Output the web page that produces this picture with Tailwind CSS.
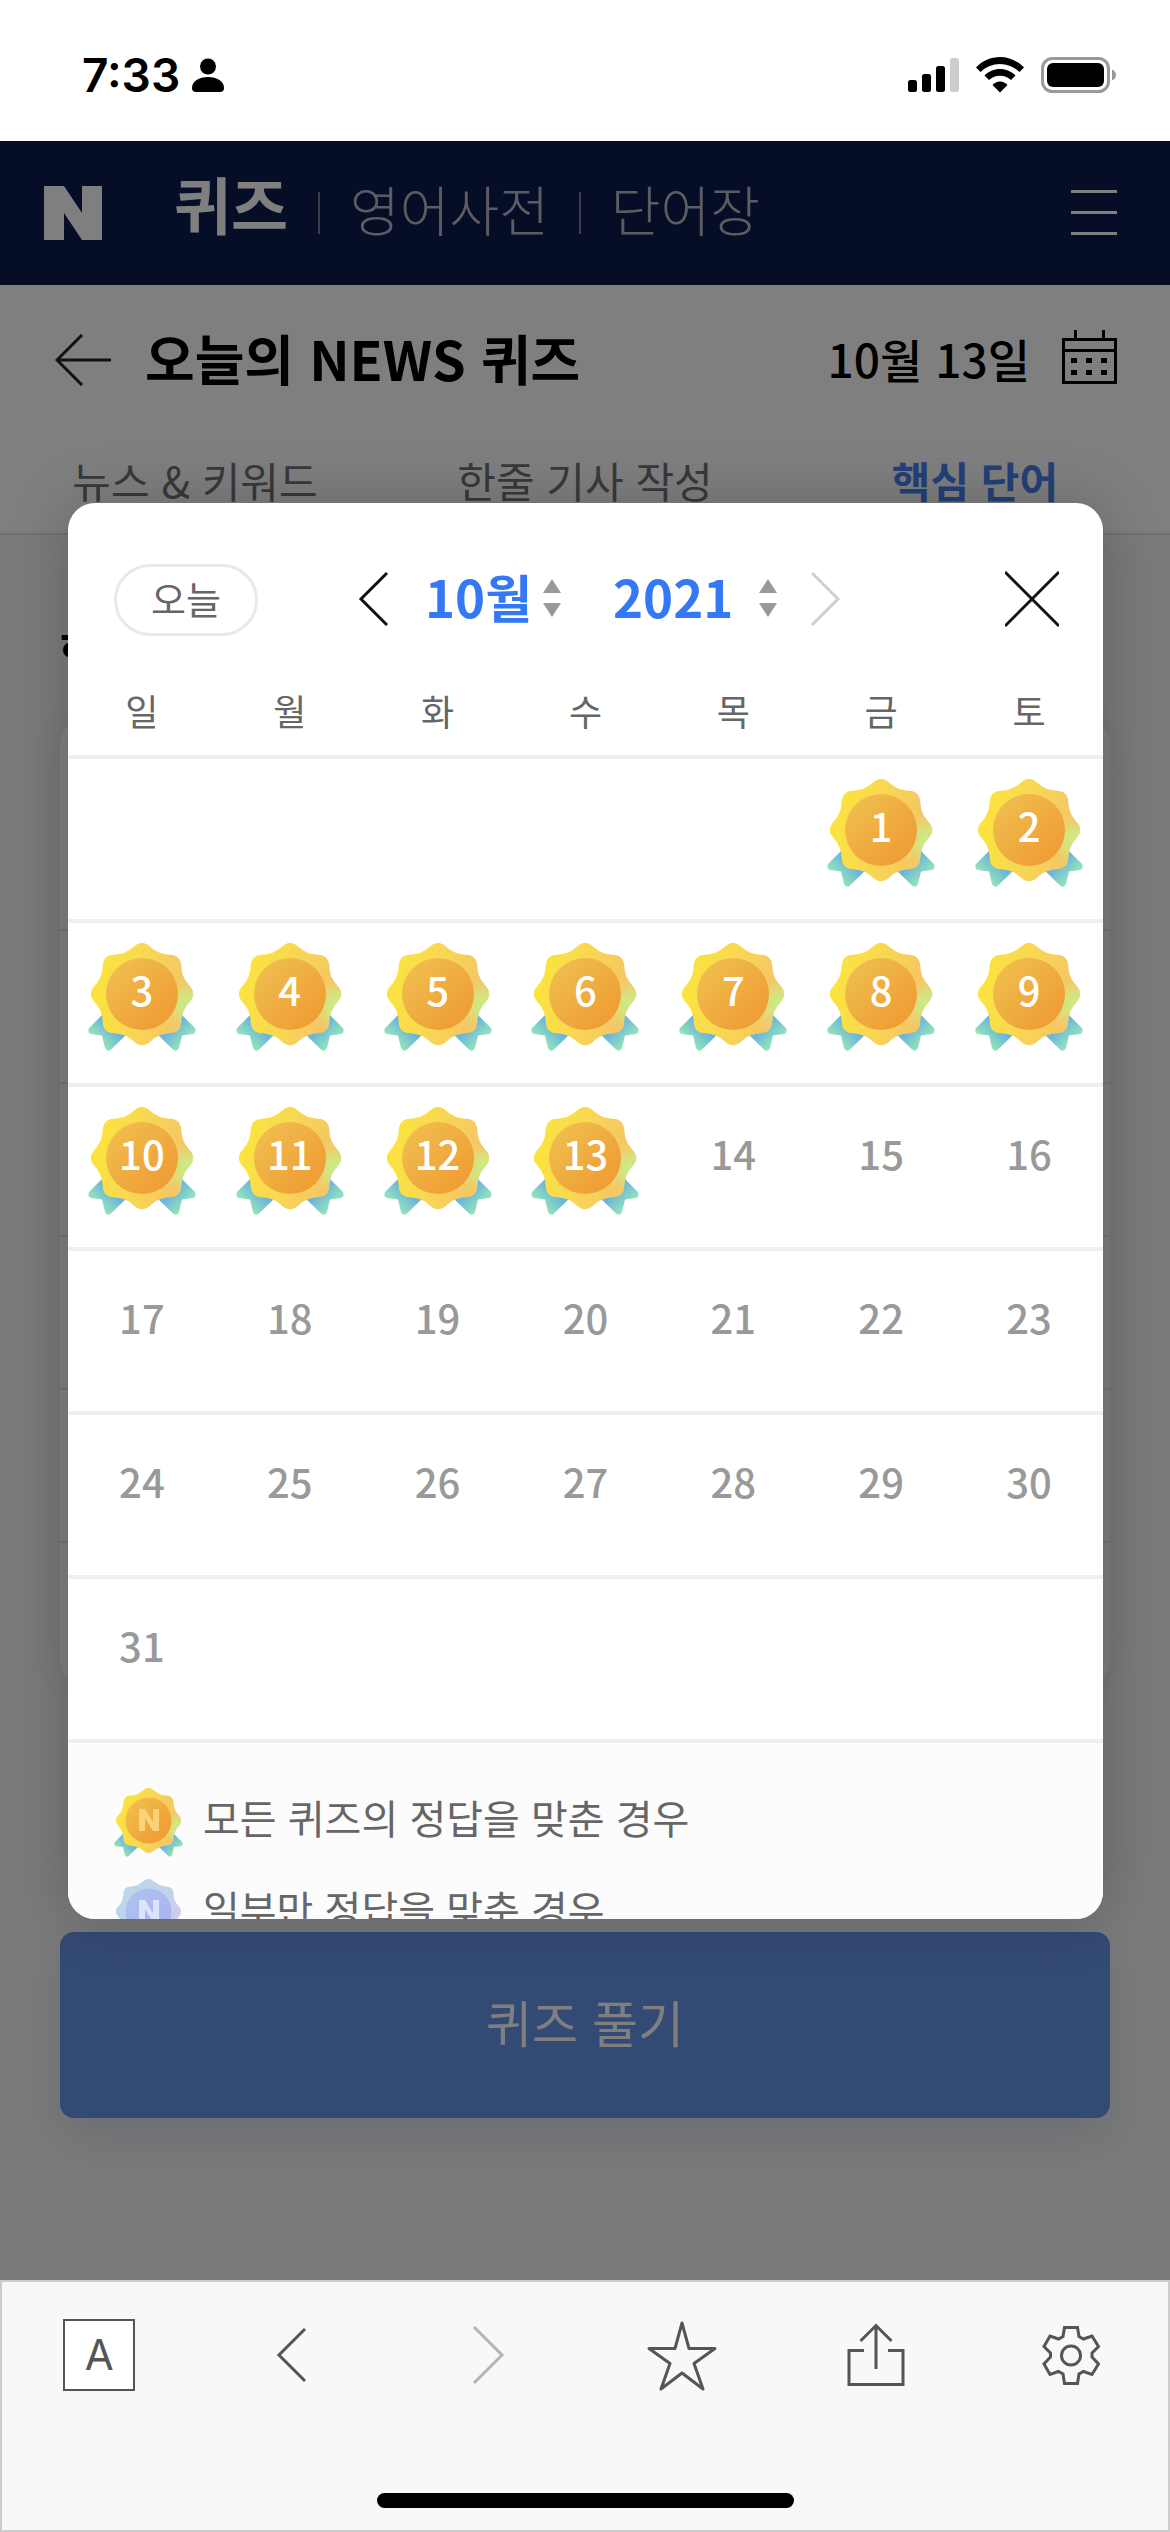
<!DOCTYPE html>
<html lang="ko">
<head>
  <meta charset="UTF-8">
  <meta name="viewport" content="width=device-width, initial-scale=1.0">
  <title>오늘의 NEWS 퀴즈</title>
  <script src="https://cdn.jsdelivr.net/npm/@tailwindcss/browser@4"></script>
</head>
<body class="min-h-screen flex flex-col bg-white font-['Noto_Sans_CJK_KR',sans-serif] text-black">
  <!-- 공용 심볼 -->
  <svg width="0" height="0" class="absolute" aria-hidden="true">
    <defs>
      <linearGradient id="goldStar" x1="0" y1="0.4" x2="1" y2="0.6">
        <stop offset="0" stop-color="#fce43c"/>
        <stop offset="0.45" stop-color="#f8d852"/>
        <stop offset="0.9" stop-color="#f5c566"/>
      </linearGradient>
      <radialGradient id="goldGreen" gradientUnits="userSpaceOnUse" cx="101" cy="62" r="30">
        <stop offset="0" stop-color="#c4f088"/>
        <stop offset="0.4" stop-color="#d0e884" stop-opacity="0.8"/>
        <stop offset="1" stop-color="#f0cc70" stop-opacity="0"/>
      </radialGradient>
      <linearGradient id="goldCircle" x1="0" y1="0" x2="1" y2="1">
        <stop offset="0.1" stop-color="#f0be4e"/>
        <stop offset="0.8" stop-color="#ef9f36"/>
      </linearGradient>
      <linearGradient id="ribbonLeft" gradientUnits="userSpaceOnUse" x1="22" y1="84" x2="9" y2="97">
        <stop offset="0" stop-color="#6cb6da"/>
        <stop offset="1" stop-color="#94e4ba"/>
      </linearGradient>
      <linearGradient id="ribbonRight" gradientUnits="userSpaceOnUse" x1="86" y1="84" x2="99" y2="97">
        <stop offset="0" stop-color="#6cb6da"/>
        <stop offset="1" stop-color="#94e4ba"/>
      </linearGradient>
      <linearGradient id="blueStar" x1="0" y1="0.3" x2="1" y2="0.7">
        <stop offset="0" stop-color="#bcd6ea"/>
        <stop offset="0.7" stop-color="#c0d4e8"/>
        <stop offset="1" stop-color="#d8c8f4"/>
      </linearGradient>
      <linearGradient id="blueCircle" x1="0" y1="0" x2="1" y2="1">
        <stop offset="0" stop-color="#b0c4ee"/>
        <stop offset="1" stop-color="#a8b0f4"/>
      </linearGradient>
      <path id="starShape" d="M45.8 3.7Q54 -4 62.3 3.7Q70.5 11.3 81.7 11.7Q92.9 12.1 93.3 23.3Q93.7 34.5 101.4 42.8Q109 51 101.4 59.3Q93.7 67.5 93.3 78.7Q92.9 89.9 81.7 90.3Q70.5 90.7 62.3 98.4Q54 106 45.8 98.4Q37.5 90.7 26.3 90.3Q15.1 89.9 14.7 78.7Q14.3 67.5 6.7 59.3Q-1 51 6.7 42.8Q14.3 34.5 14.7 23.3Q15.1 12.1 26.3 11.7Q37.5 11.3 45.8 3.7Z"/>
    </defs>
    <symbol id="badgeGold" viewBox="0 0 108 108">
      <path fill="url(#ribbonLeft)" d="M14 72L1 85Q-1 90 3 91L14 92.5L17 105Q19 109.5 23 106.5L38 92Z"/>
      <path fill="url(#ribbonRight)" d="M94 72L107 85Q109 90 105 91L94 92.5L91 105Q89 109.5 85 106.5L70 92Z"/>
      <use href="#starShape" fill="url(#goldStar)"/>
      <use href="#starShape" fill="url(#goldGreen)"/>
      <circle cx="54" cy="51" r="36" fill="url(#goldCircle)"/>
    </symbol>
    <symbol id="badgeBlue" viewBox="0 0 108 108">
      <path fill="#b4d4ec" d="M14 72L1 85Q-1 90 3 91L14 92.5L17 105Q19 109.5 23 106.5L38 92Z"/>
      <path fill="#b4d4ec" d="M94 72L107 85Q109 90 105 91L94 92.5L91 105Q89 109.5 85 106.5L70 92Z"/>
      <use href="#starShape" fill="url(#blueStar)"/>
      <circle cx="54" cy="51" r="36" fill="url(#blueCircle)"/>
    </symbol>
    <symbol id="spinner" viewBox="0 0 18 40">
      <path fill="#999" d="M9 1L18 15H0ZM9 39L0 25H18Z"/>
    </symbol>
  </svg>

  <!-- 상태 표시줄 -->
  <div class="h-[141px] shrink-0 flex items-center justify-between pl-[82px] pr-[53px] pt-2">
    <div class="flex items-center gap-3">
      <span class="font-['Inter',sans-serif] font-semibold text-[46px] leading-[48px]">7:33</span>
      <svg class="w-8 h-[34px]" viewBox="0 0 32 34"><circle cx="16" cy="8.500" r="8"/><path d="M0 30C0 23 7 19 16 19S32 23 32 30Q32 34 28 34H4Q0 34 0 30Z"/></svg>
    </div>
    <div class="flex items-center gap-[17px]">
      <svg class="w-[51px] h-[36px]" viewBox="0 0 51 36"><rect y="23" width="9" height="12" rx="2.500"/><rect x="14" y="17" width="9" height="18" rx="2.500"/><rect x="28" y="9" width="9" height="26" rx="2.500"/><rect x="42" y="1" width="9" height="34" rx="2.500" fill="#ccc"/></svg>
      <svg class="w-12 h-[36px]" viewBox="0 0 48 36"><path d="M24 0C33 0 42 4 48 10.500L43.500 15C38 9.800 31 7 24 7S10 9.800 4.500 15L0 10.500C6 4 15 0 24 0Z"/><path d="M24 12C30 12 35.500 14.500 39.500 18.500L35 23C32 20.200 28 18.700 24 18.700S16 20.200 13 23L8.500 18.500C12.500 14.500 18 12 24 12Z"/><path d="M24 24.500C27 24.500 29.500 25.800 31.500 28L24 35.500L16.500 28C18.500 25.800 21 24.500 24 24.500Z"/></svg>
      <svg class="w-[76px] h-[36px]" viewBox="0 0 76 36"><rect x="1.500" y="1.500" width="66" height="33" rx="10" fill="none" stroke="#999" stroke-width="3"/><rect x="6" y="6" width="57" height="24" rx="6"/><path fill="#999" d="M71 12.500Q75 14.500 75 18T71 23.500Z"/></svg>
    </div>
  </div>

  <div class="relative flex-1 flex flex-col overflow-hidden">
    <header class="h-36 shrink-0 bg-[#0c1a4c] flex items-center pl-11 pr-[53px]">
      <a href="#" aria-label="네이버" class="text-white"><svg class="w-[58px] h-[54px]" viewBox="0 0 58 54"><path fill="#fff" d="M0 0H20L38 27V0H58V54H38L20 27V54H0Z"/></svg></a>
      <nav class="ml-[72px] flex items-center">
        <a href="#" class="text-white font-bold text-[62px] leading-[80px] pb-5">퀴즈</a>
        <span class="w-[2px] h-[42px] bg-[#7a7d90] mx-[30px]"></span>
        <a href="#" class="text-[#b8b8c4] font-light text-[54px] leading-[80px] pb-2">영어사전</a>
        <span class="w-[2px] h-[42px] bg-[#7a7d90] mx-[30px]"></span>
        <a href="#" class="text-[#b8b8c4] font-light text-[54px] leading-[80px] pb-2">단어장</a>
      </nav>
      <button type="button" aria-label="메뉴" class="ml-auto"><svg class="w-[46px] h-[46px]" viewBox="0 0 46 46"><path stroke="#fff" stroke-width="3" d="M0 1.500H46M0 22.500H46M0 43.500H46"/></svg></button>
    </header>

    <div class="bg-white border-b-2 border-[#dcdfe4]">
      <div class="h-[150px] flex items-center pl-[55px] pr-[53px]">
        <button type="button" aria-label="뒤로"><svg class="w-14 h-[52px]" viewBox="0 0 56 52"><path fill="none" stroke="#222" stroke-width="3" d="M56 26H2M27 1L2 26L27 51"/></svg></button>
        <h1 class="ml-[34px] pb-1 font-bold text-[54px] leading-[80px]">오늘의 NEWS 퀴즈</h1>
        <span class="ml-auto pb-1 font-medium text-[46px] leading-[80px]">10월 13일</span>
        <button type="button" aria-label="달력" class="ml-8 pb-1.5"><svg class="w-[55px] h-[54px]" viewBox="0 0 55 54"><path fill="none" stroke="#000" stroke-width="3" d="M1.500 9.500H53.500V52.500H1.500ZM1.500 20.500H53.500M13.500 0V9M41.500 0V9"/><path d="M9 28h6v5H9zM24 28h6v5H24zM39 28h6v5H39zM9 40h6v5H9zM24 40h6v5H24zM39 40h6v5H39z"/></svg></button>
      </div>
      <nav class="h-[98px] grid grid-cols-3 text-center text-[42px] leading-[90px] text-[#707378]">
        <a href="#">뉴스 &amp; 키워드</a>
        <a href="#">한줄 기사 작성</a>
        <a href="#" class="font-bold text-[#4680f0]">핵심 단어</a>
      </nav>
    </div>

    <main class="flex-1 bg-[#f4f5f7] px-[60px] pt-20">
      <h2 class="font-bold text-[48px] leading-[70px]">핵심 단어</h2>
      <div class="mt-8 bg-white rounded-[28px] shadow-[0_0_40px_rgba(30,40,80,0.08)] divide-y-2 divide-gray-200">
        <div class="h-[214px]"></div>
        <div class="h-[153px]"></div>
        <div class="h-[153px]"></div>
        <div class="h-[153px]"></div>
        <div class="h-[153px]"></div>
        <div class="h-[144px]"></div>
      </div>
      <button type="button" class="mt-[245px] pb-2 w-full h-[186px] rounded-[14px] bg-[#6694ea] text-white text-[50px] leading-[60px] shadow-[0_20px_50px_rgba(30,40,80,0.12)]">퀴즈 풀기</button>
    </main>

    <!-- 달력 레이어 -->
    <div class="absolute inset-0 bg-black/50 pt-[362px] pb-[361px] pl-[68px] pr-[67px]">
      <div role="dialog" aria-label="달력" class="h-full overflow-hidden rounded-[27px] bg-white shadow-[0_0_60px_rgba(0,0,0,0.2)]">
        <div class="flex items-center pt-[61px] pb-7 pl-[46px] pr-11">
          <button type="button" class="w-36 h-[72px] pb-1 rounded-full border-[3px] border-[#e8e9eb] text-[#666] text-[38px] leading-[60px]">오늘</button>
          <div class="ml-[100px] h-[54px] flex items-center">
            <button type="button" aria-label="이전 달"><svg class="w-[31px] h-[62px]" viewBox="0 0 31 62"><path fill="none" stroke="#111" stroke-width="3" d="M29 4L3 30L29 56"/></svg></button>
            <label class="ml-[36px] flex items-center text-[#3478f6]">
              <select aria-label="월" class="appearance-none bg-transparent w-[112px] pb-2 font-bold text-[51px] leading-[72px]">
                <option>10월</option>
              </select>
              <svg class="ml-1.5 mb-1 w-[18px] h-10"><use href="#spinner"/></svg>
            </label>
            <label class="ml-[52px] flex items-center text-[#3478f6]">
              <select aria-label="연도" class="appearance-none bg-transparent w-[134px] pb-2 font-bold text-[51px] leading-[72px]">
                <option>2021</option>
              </select>
              <svg class="ml-3 mb-1 w-[18px] h-10"><use href="#spinner"/></svg>
            </label>
            <button type="button" aria-label="다음 달" class="ml-[33px]"><svg class="w-[31px] h-[62px]" viewBox="0 0 31 62"><path fill="none" stroke="#d0d0d0" stroke-width="3" d="M2 4L28 30L2 56"/></svg></button>
          </div>
          <button type="button" aria-label="닫기" class="ml-auto"><svg class="w-[54px] h-[62px]" viewBox="0 0 54 62"><path stroke="#111" stroke-width="3" d="M0 3L54 57M54 3L0 57"/></svg></button>
        </div>
        <table class="w-full table-fixed border-separate border-spacing-0 text-center">
          <thead>
            <tr class="text-[36px] leading-[48px] text-[#666]">
              <th class="h-[95px] border-b-4 border-[#eeeff3] font-normal">일</th>
              <th class="border-b-4 border-[#eeeff3] font-normal">월</th>
              <th class="border-b-4 border-[#eeeff3] font-normal">화</th>
              <th class="border-b-4 border-[#eeeff3] font-normal">수</th>
              <th class="border-b-4 border-[#eeeff3] font-normal">목</th>
              <th class="border-b-4 border-[#eeeff3] font-normal">금</th>
              <th class="border-b-4 border-[#eeeff3] font-normal">토</th>
            </tr>
          </thead>
          <tbody id="calendarBody"></tbody>
        </table>
        <ul class="bg-[#fcfcfc] pt-11 pb-11 pl-[46px] space-y-[21px] text-[40px] leading-[60px] text-[#666]">
          <li class="flex items-center gap-5">
            <span class="relative w-[69px] h-[69px] flex items-center justify-center">
              <svg class="absolute inset-0 w-full h-full"><use href="#badgeGold"/></svg>
              <svg class="relative w-5 h-[22px] mb-1" viewBox="0 0 20 22"><path fill="#fbd27c" d="M0 0H6L14 13V0H20V22H14L6 9V22H0Z"/></svg>
            </span>
            <span class="pb-2.5">모든 퀴즈의 정답을 맞춘 경우</span>
          </li>
          <li class="flex items-center gap-5">
            <span class="relative w-[69px] h-[69px] flex items-center justify-center">
              <svg class="absolute inset-0 w-full h-full"><use href="#badgeBlue"/></svg>
              <svg class="relative w-5 h-[22px] mb-1" viewBox="0 0 20 22"><path fill="#dbe4fb" d="M0 0H6L14 13V0H20V22H14L6 9V22H0Z"/></svg>
            </span>
            <span class="pb-2.5">일부만 정답을 맞춘 경우</span>
          </li>
        </ul>
      </div>
    </div>
  </div>

  <!-- 하단 툴바 -->
  <footer class="h-[252px] shrink-0 border-2 border-[#ccc] bg-[#f8f8f8] flex flex-col items-center justify-between pb-[22px]">
    <nav class="w-full h-[146px] grid grid-cols-6 place-items-center text-[#555]">
      <button type="button" aria-label="글자 크기" class="w-[72px] h-[72px] border-2 border-[#555] bg-white font-['Inter',sans-serif] text-[42px] leading-[60px]">A</button>
      <button type="button" aria-label="뒤로"><svg class="w-[60px] h-[72px]" viewBox="0 0 60 72"><path fill="none" stroke="#555" stroke-width="3" d="M42 10L16 36L42 62"/></svg></button>
      <button type="button" aria-label="앞으로"><svg class="w-[60px] h-[72px]" viewBox="0 0 60 72"><path fill="none" stroke="#b5b5b5" stroke-width="3" d="M16 8L44 36L16 64"/></svg></button>
      <button type="button" aria-label="즐겨찾기"><svg class="w-[72px] h-[72px]" viewBox="0 0 72 72"><path fill="none" stroke="#555" stroke-width="3" stroke-linejoin="round" d="M36 4L43 29.500H69L48 44.500L57 70L36 54L15 70L24 44.500L3 29.500H29Z"/></svg></button>
      <button type="button" aria-label="공유"><svg class="w-[60px] h-[72px]" viewBox="0 0 60 72"><path fill="none" stroke="#555" stroke-width="3" d="M18 31.500H3V65.500H57V31.500H42M30 50V7M14.500 22L30 6.500L45.500 22"/></svg></button>
      <button type="button" aria-label="설정"><svg class="w-[60px] h-[72px]" viewBox="0 0 60 72"><path fill="none" stroke="#555" stroke-width="3" d="M23.500 8.500H36.500L38 17.500L42.500 20L51 17L57.500 27.500L51 34V38L57.500 45L51 55.500L42.500 52.500L38 55L36.500 64.500H23.500L22 55L17.500 52.500L9 55.500L3 45L9.500 38V34L3 27.500L9 17L17.500 20L22 17.500Z"/><circle cx="30" cy="36.500" r="9.500" fill="none" stroke="#555" stroke-width="3"/></svg></button>
    </nav>
    <div class="w-[417px] h-[15px] rounded-full bg-black"></div>
  </footer>

  <script>
    // 2021년 10월 달력 생성
    const firstDay = new Date(2021, 9, 1).getDay();
    const lastDate = new Date(2021, 10, 0).getDate();
    const lastSolved = 13;

    function renderDay(date) {
      if (date < 1 || date > lastDate) return '';
      if (date <= lastSolved) {
        return `<button type="button" class="relative w-[108px] h-[108px] pb-4 text-[40px] leading-[60px] font-medium text-white">
          <svg class="absolute inset-0 w-full h-full"><use href="#badgeGold"/></svg><span class="relative">${date}</span></button>`;
      }
      return `<button type="button" class="w-[108px] h-[108px] pb-4 text-[40px] leading-[60px] font-medium text-[#999]">${date}</button>`;
    }

    let rows = '';
    for (let start = 1 - firstDay; start <= lastDate; start += 7) {
      rows += '<tr>';
      for (let i = 0; i < 7; i++) {
        rows += `<td class="h-[164px] pt-5 align-top border-b-4 border-[#eeeff3]">${renderDay(start + i)}</td>`;
      }
      rows += '</tr>';
    }
    document.getElementById('calendarBody').innerHTML = rows;
  </script>
</body>
</html>
